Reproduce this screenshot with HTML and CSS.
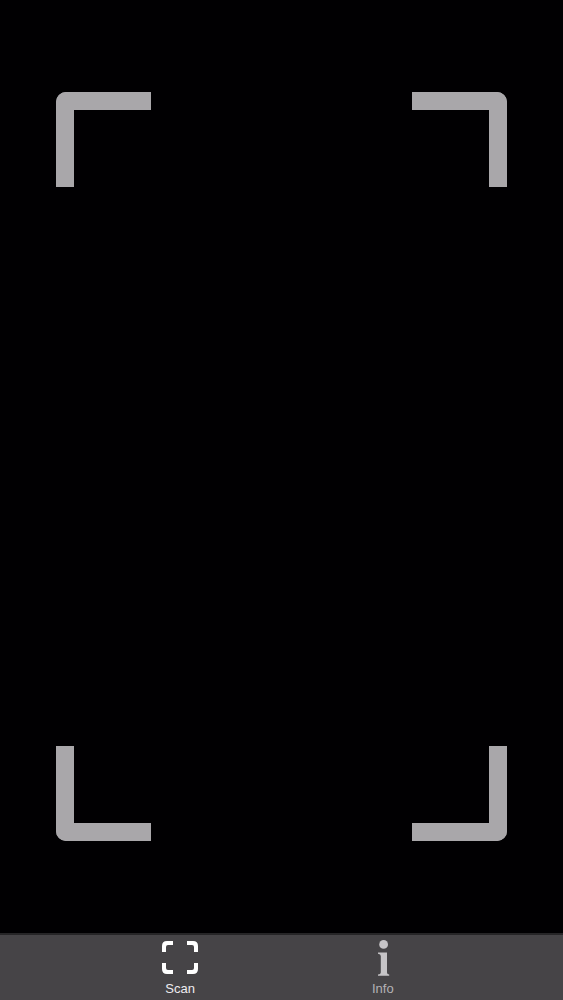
FILE: index.html
```html
<!DOCTYPE html>
<html lang="en">
<head>
<meta charset="utf-8">
<meta name="viewport" content="width=device-width, initial-scale=1">
<title>Scan</title>
<link rel="stylesheet" href="styles.css">
</head>
<body>
<main class="finder" aria-label="Viewfinder">
  <span class="corner top left"></span>
  <span class="corner top right"></span>
  <span class="corner bottom left"></span>
  <span class="corner bottom right"></span>
</main>
<nav class="tabs">
  <button class="tab active" type="button" aria-current="page">
    <svg class="icon" width="36" height="36" viewBox="0 0 36 36" fill="currentColor" aria-hidden="true">
      <path d="M0 11V6Q0 1 5 1H11V5H6Q4 5 4 7V12H0Z"/>
      <path d="M36 11V6Q36 1 31 1H25V5H30Q32 5 32 7V12H36Z"/>
      <path d="M0 23V29Q0 34 5 34H11V30H6Q4 30 4 28V23Z"/>
      <path d="M36 23V29Q36 34 31 34H25V30H30Q32 30 32 28V23Z"/>
    </svg>
    <span class="label">Scan</span>
  </button>
  <button class="tab" type="button">
    <svg class="icon" width="36" height="36" viewBox="0 0 36 36" fill="currentColor" aria-hidden="true">
      <circle cx="18.6" cy="4.4" r="4.4"/>
      <path d="M13 12.4H22V32.5Q22 34.3 24.2 34.5V35.8H13V34.5Q15.8 34.3 15.8 32.5V16Q15.8 14 13 13.7Z"/>
    </svg>
    <span class="label">Info</span>
  </button>
</nav>
</body>
</html>
```
FILE: styles.css
```css
* {
  box-sizing: border-box;
}

body {
  margin: 0;
  min-height: 100vh;
  display: flex;
  flex-direction: column;
  background: #010002;
  font-family: "Liberation Sans", Arial, sans-serif;
}

.finder {
  flex: 1;
  display: grid;
  grid-template-columns: auto auto;
  justify-content: space-between;
  align-content: space-between;
  padding: 92px 10%;
}

.corner {
  width: 95px;
  height: 95px;
  border: 0 solid #a9a7aa;
}

.top {
  border-top-width: 18px;
}

.bottom {
  border-bottom-width: 18px;
}

.left {
  border-left-width: 18px;
}

.right {
  border-right-width: 18px;
}

.top.left {
  border-top-left-radius: 10px;
}

.top.right {
  border-top-right-radius: 10px;
}

.bottom.left {
  border-bottom-left-radius: 10px;
}

.bottom.right {
  border-bottom-right-radius: 10px;
}

.tabs {
  display: flex;
  justify-content: center;
  gap: 12%;
  border-top: 2px solid #262527;
  background: #464447;
}

.tab {
  width: 24%;
  padding: 5px 0 3px;
  display: flex;
  flex-direction: column;
  align-items: center;
  gap: 5px;
  border: 0;
  background: none;
  color: #c6c4c7;
  font: inherit;
}

.active {
  color: #fff;
}

.label {
  color: #b4b2b5;
  font-size: 13px;
  line-height: 16px;
}

.active .label {
  color: #eeecef;
}
```
